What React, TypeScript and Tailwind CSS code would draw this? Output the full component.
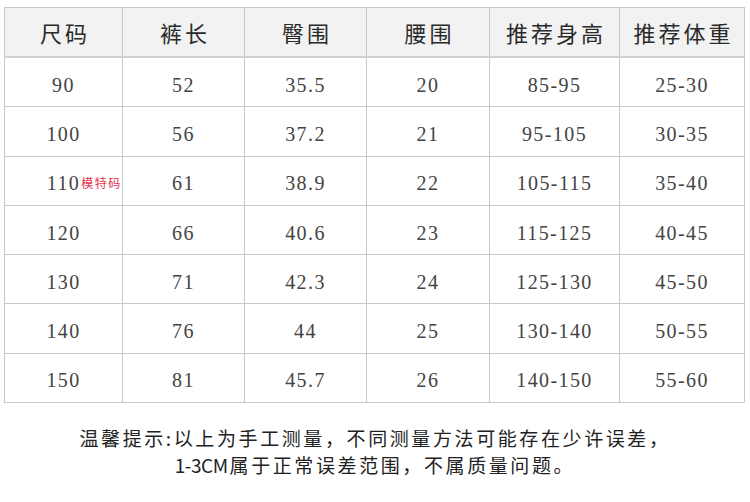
import React from 'react';

const headers = ['尺码', '裤长', '臀围', '腰围', '推荐身高', '推荐体重'];

const rows = [
  ['90', '52', '35.5', '20', '85-95', '25-30'],
  ['100', '56', '37.2', '21', '95-105', '30-35'],
  ['110', '61', '38.9', '22', '105-115', '35-40'],
  ['120', '66', '40.6', '23', '115-125', '40-45'],
  ['130', '71', '42.3', '24', '125-130', '45-50'],
  ['140', '76', '44', '25', '130-140', '50-55'],
  ['150', '81', '45.7', '26', '140-150', '55-60'],
];

const cols = 'grid grid-cols-[118px_122px_122px_123px_130px_124px] divide-x divide-[#c8c8c8]';

export default function App() {
  return (
    <div className="w-[750px] h-[502px] bg-white overflow-hidden">
      {/* Size table */}
      <div className="ml-1 mt-[7px] w-[741px] border border-[#c8c8c8]">
        <div className={`${cols} h-[50px] bg-[#f2f2f2] border-b-2 border-[#d2d2d2]`}>
          {headers.map((h) => (
            <div
              key={h}
              className="flex items-center justify-center text-[22px] text-[#2a2a2a] font-['Noto_Sans_CJK_SC',sans-serif] tracking-[3px]"
            >
              <span className="-mr-[3px]">{h}</span>
            </div>
          ))}
        </div>
        {rows.map((row, i) => (
          <div
            key={row[0]}
            className={`${cols} ${i > 0 ? 'h-[49.3px] border-t border-[#c8c8c8]' : 'h-[48.3px]'}`}
          >
            {row.map((cell, j) => (
              <div
                key={j}
                className="flex items-center justify-center pt-[5px] text-[20px] text-[#444] font-['Liberation_Serif',serif] tracking-[1.4px]"
              >
                <span className="relative">
                  {cell}
                  {j === 0 && cell === '110' && (
                    <span className="absolute left-full top-1/2 -translate-y-1/2 ml-[1px] whitespace-nowrap text-[12px] tracking-[1.5px] text-[#e4304a] font-['Noto_Sans_CJK_SC',sans-serif]">
                      模特码
                    </span>
                  )}
                </span>
              </div>
            ))}
          </div>
        ))}
      </div>

      {/* Footer note */}
      <div className="mt-[21px] text-center text-[19px] leading-[27px] tracking-[2.6px] text-[#222] font-['Noto_Sans_CJK_SC',sans-serif]">
        <p>温馨提示:以上为手工测量，不同测量方法可能存在少许误差，</p>
        <p>
          <span className="tracking-[-0.5px] mr-[2px]">1-3CM</span>属于正常误差范围，不属质量问题。
        </p>
      </div>
    </div>
  );
}
